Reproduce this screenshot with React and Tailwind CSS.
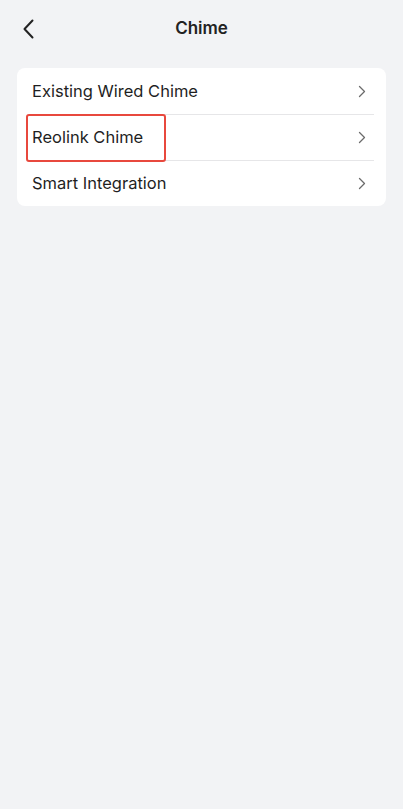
import React from "react";

const items = ["Existing Wired Chime", "Reolink Chime", "Smart Integration"];

function Chevron() {
  return (
    <svg width="8" height="13" viewBox="0 0 8 13" fill="none">
      <path d="M1.5 1.5 L6.5 6.5 L1.5 11.5" stroke="#6b6b6b" strokeWidth="1.3" strokeLinecap="round" strokeLinejoin="round" />
    </svg>
  );
}

export default function App() {
  return (
    <div
      className="min-h-[809px] w-full bg-[#f2f3f5] text-[#1f1f1f]"
      style={{ fontFamily: "Inter, 'Noto Sans', sans-serif" }}
    >
      <header className="grid h-[56px] grid-cols-[1fr_auto_1fr] items-center px-[22px] pt-[1px]">
        <button className="flex justify-self-start">
          <svg width="14" height="20" viewBox="0 0 14 20" fill="none">
            <path d="M10.5 1.5 L2.5 10 L10.5 18.5" stroke="#222" strokeWidth="2" strokeLinecap="round" strokeLinejoin="round" />
          </svg>
        </button>
        <h1 className="text-[17px] font-semibold text-[#222]">Chime</h1>
        <div />
      </header>

      <div className="mx-[17px] mt-[12px] rounded-[8px] bg-white">
        {items.map((label, i) => (
          <div key={label} className="relative flex h-[46px] items-center pl-[15px] pr-[20px]">
            {i > 0 && (
              <div className="absolute left-[15px] right-[12px] top-0 h-px bg-[#e6e6e8]" />
            )}
            <span className="flex-1 text-[16.5px]">{label}</span>
            <Chevron />
            {label === "Reolink Chime" && (
              <div className="absolute left-[9px] top-0 z-10 h-[48px] w-[140px] rounded-[3px] border-2 border-[#e8483d]" />
            )}
          </div>
        ))}
      </div>
    </div>
  );
}
